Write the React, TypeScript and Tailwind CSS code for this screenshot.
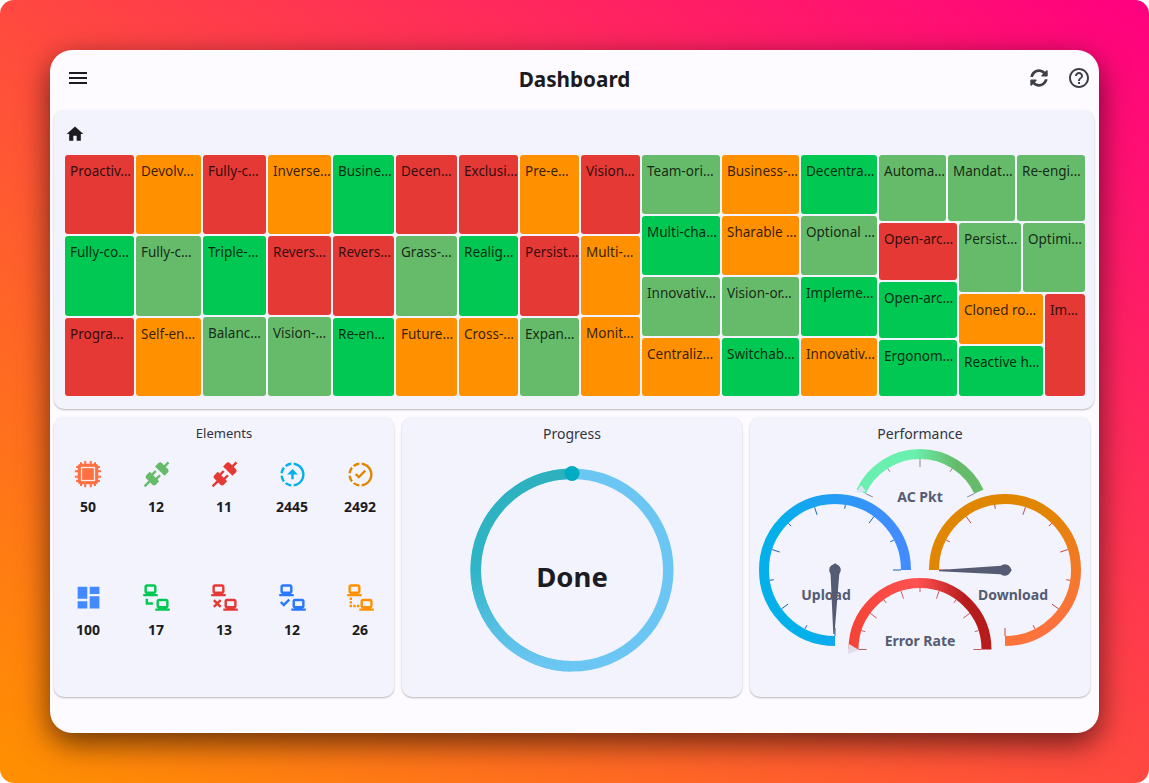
import React from "react";
import { MdMenu, MdHome, MdHelpOutline, MdDashboard } from "react-icons/md";
import { FaSyncAlt } from "react-icons/fa";

const tone: Record<string, string> = {
  r: "bg-[#e53935]",
  o: "bg-[#ff9100]",
  g: "bg-[#00c853]",
  s: "bg-[#66bb6a]",
};

function Cell({ t, c, size }: { t: string; c: string; size: string }) {
  return (
    <div className={`${size} ${tone[c]} shrink-0 rounded-[3px] pl-[5px] pt-[7px] text-[13.5px] leading-[18px] text-black/80 whitespace-nowrap overflow-hidden`}>
      {t}
    </div>
  );
}

const groupA: { w: string; cells: [string, string, string][] }[] = [
  { w: "w-[69px]", cells: [["Proactiv…", "r", "h-[79px]"], ["Fully-co…", "g", "h-[80px]"], ["Progra…", "r", "h-[78px]"]] },
  { w: "w-[65px]", cells: [["Devolv…", "o", "h-[79px]"], ["Fully-c…", "s", "h-[80px]"], ["Self-en…", "o", "h-[78px]"]] },
  { w: "w-[63px]", cells: [["Fully-c…", "r", "h-[79px]"], ["Triple-…", "g", "h-[79px]"], ["Balanc…", "s", "h-[79px]"]] },
  { w: "w-[63px]", cells: [["Inverse…", "o", "h-[79px]"], ["Revers…", "r", "h-[79px]"], ["Vision-…", "s", "h-[79px]"]] },
  { w: "w-[61px]", cells: [["Busine…", "g", "h-[79px]"], ["Revers…", "r", "h-[80px]"], ["Re-en…", "g", "h-[78px]"]] },
  { w: "w-[61px]", cells: [["Decen…", "r", "h-[79px]"], ["Grass-…", "s", "h-[80px]"], ["Future…", "o", "h-[78px]"]] },
  { w: "w-[59px]", cells: [["Exclusi…", "r", "h-[79px]"], ["Realig…", "g", "h-[80px]"], ["Cross-…", "o", "h-[78px]"]] },
  { w: "w-[59px]", cells: [["Pre-e…", "o", "h-[79px]"], ["Persist…", "r", "h-[80px]"], ["Expan…", "s", "h-[78px]"]] },
  { w: "w-[59px]", cells: [["Vision…", "r", "h-[79px]"], ["Multi-…", "o", "h-[79px]"], ["Monit…", "o", "h-[79px]"]] },
];

const groupB: { w: string; cells: [string, string][] }[] = [
  { w: "w-[78px]", cells: [["Team-ori…", "s"], ["Multi-cha…", "g"], ["Innovativ…", "s"], ["Centraliz…", "o"]] },
  { w: "w-[77px]", cells: [["Business-…", "o"], ["Sharable …", "o"], ["Vision-or…", "s"], ["Switchab…", "g"]] },
  { w: "w-[76px]", cells: [["Decentra…", "g"], ["Optional …", "s"], ["Impleme…", "g"], ["Innovativ…", "o"]] },
];
const bHeights = ["h-[59px]", "h-[59px]", "h-[59px]", "h-[58px]"];

function Treemap() {
  return (
    <div className="flex gap-[2px]">
      {groupA.map((col, i) => (
        <div key={i} className={`${col.w} flex flex-col gap-[2px]`}>
          {col.cells.map(([t, c, h]) => (
            <Cell key={t + c} t={t} c={c} size={h} />
          ))}
        </div>
      ))}
      {groupB.map((col, i) => (
        <div key={i} className={`${col.w} flex flex-col gap-[2px]`}>
          {col.cells.map(([t, c], j) => (
            <Cell key={t + c} t={t} c={c} size={bHeights[j]} />
          ))}
        </div>
      ))}
      <div className="w-[206px] flex flex-col gap-[2px]">
        <div className="flex gap-[2px]">
          <Cell t="Automa…" c="s" size="w-[67px] h-[66px]" />
          <Cell t="Mandat…" c="s" size="w-[67px] h-[66px]" />
          <Cell t="Re-engi…" c="s" size="w-[68px] h-[66px]" />
        </div>
        <div className="flex gap-[2px]">
          <div className="w-[78px] flex flex-col gap-[2px]">
            <Cell t="Open-arc…" c="r" size="h-[57px]" />
            <Cell t="Open-arc…" c="g" size="h-[56px]" />
            <Cell t="Ergonom…" c="g" size="h-[56px]" />
          </div>
          <div className="w-[126px] flex flex-col gap-[2px]">
            <div className="flex gap-[2px]">
              <Cell t="Persist…" c="s" size="w-[62px] h-[69px]" />
              <Cell t="Optimi…" c="s" size="w-[62px] h-[69px]" />
            </div>
            <div className="flex gap-[2px]">
              <div className="w-[84px] flex flex-col gap-[2px]">
                <Cell t="Cloned ro…" c="o" size="h-[50px]" />
                <Cell t="Reactive h…" c="g" size="h-[50px]" />
              </div>
              <Cell t="Im…" c="r" size="w-[40px] h-[102px]" />
            </div>
          </div>
        </div>
      </div>
    </div>
  );
}

const ring =
  "M13,2.03V2.05L13,4.05C17.39,4.59 20.5,8.58 19.96,12.97C19.5,16.61 16.64,19.5 13,19.93V21.93C18.5,21.38 22.5,16.5 21.95,11C21.5,6.25 17.73,2.5 13,2.03M11,2.06C9.05,2.25 7.19,3 5.67,4.26L7.1,5.74C8.22,4.84 9.57,4.26 11,4.06V2.06M4.26,5.67C3,7.19 2.25,9.04 2.05,11H4.05C4.24,9.58 4.8,8.23 5.69,7.1L4.26,5.67M2.06,13C2.26,14.96 3.03,16.81 4.27,18.33L5.69,16.9C4.81,15.77 4.24,14.42 4.06,13H2.06M7.1,18.37L5.67,19.74C7.18,21 9.04,21.79 11,22V20C9.58,19.82 8.23,19.25 7.1,18.37";
const laptops =
  "M4,1C2.89,1 2,1.89 2,3V7C2,8.11 2.89,9 4,9H1V11H13V9H10C11.11,9 12,8.11 12,7V3C12,1.89 11.11,1 10,1H4M4,3H10V7H4V3M14,13C12.89,13 12,13.89 12,15V19C12,20.11 12.89,21 14,21H11V23H23V21H20C21.11,21 22,20.11 22,19V15C22,13.89 21.11,13 20,13H14M14,15H20V19H14V15Z";
const plug =
  "M21.4 7.5C22.2 8.3 22.2 9.6 21.4 10.3L18.6 13.1L10.8 5.3L13.6 2.5C14.4 1.7 15.7 1.7 16.4 2.5L18.2 4.3L21.2 1.3L22.6 2.7L19.6 5.7L21.4 7.5M15.6 13.3L14.2 11.9L11.4 14.7L9.3 12.6L12.1 9.8L10.7 8.4L7.9 11.2L6.4 9.8L3.6 12.6C2.8 13.4 2.8 14.7 3.6 15.4L5.4 17.2L1.4 21.2L2.8 22.6L6.8 18.6L8.6 20.4C9.4 21.2 10.7 21.2 11.4 20.4L14.2 17.6L12.8 16.2L15.6 13.3Z";

function I({ d, c }: { d: string; c: string }) {
  return (
    <svg viewBox="0 0 24 24" className={`w-[29px] h-[29px] ${c}`} fill="currentColor">
      <path d={d} />
    </svg>
  );
}

function Chip() {
  return (
    <svg viewBox="0 0 24 24" className="w-[30px] h-[30px] text-[#ff7043]" fill="currentColor">
      <path d="M9 1.5h1.6V5H9zM13.4 1.5H15V5h-1.6zM9 19h1.6v3.5H9zM13.4 19H15v3.5h-1.6zM1.5 9H5v1.6H1.5zM1.5 13.4H5V15H1.5zM19 9h3.5v1.6H19zM19 13.4h3.5V15H19zM5.6 2.5h1.6V5H5.6zM16.8 2.5h1.6V5h-1.6zM5.6 19h1.6v2.5H5.6zM16.8 19h1.6v2.5h-1.6zM2.5 5.6H5v1.6H2.5zM2.5 16.8H5v1.6H2.5zM19 5.6h2.5v1.6H19zM19 16.8h2.5v1.6H19z" />
      <rect x="3.8" y="3.8" width="16.4" height="16.4" rx="2.6" />
      <rect x="6.8" y="6.8" width="10.4" height="10.4" fill="none" stroke="#fdeee8" strokeWidth="1" />
    </svg>
  );
}

const elements: { n: string; icon: React.ReactNode }[] = [
  { n: "50", icon: <Chip /> },
  { n: "12", icon: <I d={plug} c="text-[#66bb6a]" /> },
  { n: "11", icon: <I d={plug} c="text-[#e53935]" /> },
  { n: "2445", icon: <I d={ring + "M12,7.5L7.5,12H11V16H13V12H16.5L12,7.5Z"} c="text-[#03b0ea]" /> },
  { n: "2492", icon: <I d={ring + "M10.6,15.6L7.3,12.3L8.7,10.9L10.6,12.8L15.3,8.1L16.7,9.5Z"} c="text-[#e18600]" /> },
  { n: "100", icon: <MdDashboard size={29} color="#448aff" /> },
  { n: "17", icon: <I d={laptops + "M3,13V18H9V16H5V13H3Z"} c="text-[#00c853]" /> },
  { n: "13", icon: <I d={laptops + "M3.88,13.46L2.46,14.88L4.59,17L2.46,19.12L3.88,20.54L6,18.41L8.12,20.54L9.54,19.12L7.41,17L9.54,14.88L8.12,13.46L6,15.59L3.88,13.46Z"} c="text-[#e53935]" /> },
  { n: "12", icon: <I d={laptops + "M4.8,19.6L1.6,16.4L3,15L4.8,16.8L8.6,13L10,14.4Z"} c="text-[#2979ff]" /> },
  { n: "26", icon: <I d={laptops + "M3,12V14H5V12H3M3,15V17H5V15H3M3,18V20H5V18H3M6,18V20H8V18H6M9,18V20H11V18H9Z"} c="text-[#ff9100]" /> },
];

function Elements() {
  return (
    <div className="grid grid-cols-5 gap-y-[10px] pt-[10px]">
      {elements.map((e, i) => (
        <div key={i} className="flex flex-col items-center h-[113px]">
          <div className="h-[30px] flex items-center justify-center">{e.icon}</div>
          <div className="mt-[9px] text-[14px] leading-[18px] font-bold text-[#1c1b22]">{e.n}</div>
        </div>
      ))}
    </div>
  );
}

function pt(cx: number, cy: number, r: number, a: number) {
  const t = (a * Math.PI) / 180;
  return [cx + r * Math.sin(t), cy - r * Math.cos(t)];
}
function arc(cx: number, cy: number, r: number, a0: number, a1: number) {
  const [x0, y0] = pt(cx, cy, r, a0);
  const [x1, y1] = pt(cx, cy, r, a1);
  return `M${x0} ${y0}A${r} ${r} 0 ${a1 - a0 > 180 ? 1 : 0} 1 ${x1} ${y1}`;
}

function Gauge({ cx, cy, R, a0, a1, n, grad, tick, op }: { cx: number; cy: number; R: number; a0: number; a1: number; n: number; grad: string; tick: string; op: number }) {
  const ticks = [];
  for (let i = 0; i <= n; i++) {
    const a = a0 + ((a1 - a0) * i) / n;
    const len = i % 2 === 0 ? 8 : 4;
    const [x0, y0] = pt(cx, cy, R - 10, a);
    const [x1, y1] = pt(cx, cy, R - 10 - len, a);
    ticks.push(<line key={i} x1={x0} y1={y0} x2={x1} y2={y1} stroke={tick} strokeOpacity={op} strokeWidth={1} />);
  }
  return (
    <g>
      <path d={arc(cx, cy, R - 5, a0, a1)} fill="none" stroke={`url(#${grad})`} strokeWidth={10} />
      {ticks}
    </g>
  );
}

function Needle({ x, y, rot, len }: { x: number; y: number; rot: number; len: number }) {
  return (
    <g transform={`translate(${x} ${y}) rotate(${rot})`} fill="#555b72">
      <polygon points={`-4.6,0 4.6,0 0.6,${-len} -0.6,${-len}`} />
      <circle r="5.8" />
      <polygon points="-2.4,5 2.4,5 0,6.8" />
    </g>
  );
}

function Performance() {
  const label = { fontFamily: "'Noto Sans', sans-serif", fontWeight: 700, fontSize: 14, fill: "#555b72", textAnchor: "middle" as const };
  return (
    <svg viewBox="750 449 340 248" className="w-[340px] h-[248px] overflow-visible">
      <defs>
        <linearGradient id="gu" gradientUnits="userSpaceOnUse" x1="790" y1="570" x2="905" y2="540">
          <stop offset="0" stopColor="#03b0ea" />
          <stop offset="1" stopColor="#448aff" />
        </linearGradient>
        <linearGradient id="gd" gradientUnits="userSpaceOnUse" x1="1000" y1="530" x2="1060" y2="635">
          <stop offset="0" stopColor="#e08600" />
          <stop offset="1" stopColor="#ff7043" />
        </linearGradient>
        <linearGradient id="ga" gradientUnits="userSpaceOnUse" x1="860" y1="470" x2="980" y2="470">
          <stop offset="0" stopColor="#69f0ae" />
          <stop offset="0.45" stopColor="#69f0ae" />
          <stop offset="0.8" stopColor="#66bb6a" />
          <stop offset="1" stopColor="#66bb6a" />
        </linearGradient>
        <linearGradient id="ge" gradientUnits="userSpaceOnUse" x1="850" y1="600" x2="985" y2="600">
          <stop offset="0" stopColor="#f44336" />
          <stop offset="0.5" stopColor="#ff5252" />
          <stop offset="0.85" stopColor="#b71c1c" />
          <stop offset="1" stopColor="#b71c1c" />
        </linearGradient>
      </defs>
      <Gauge cx={835} cy={570} R={76} a0={180} a1={450} n={10} grad="gu" tick="#1565c0" op={1} />
      <Gauge cx={1005} cy={570} R={76} a0={270} a1={540} n={10} grad="gd" tick="#b71c1c" op={0.8} />
      <Gauge cx={920} cy={519} R={70} a0={-65} a1={65} n={4} grad="ga" tick="#555b72" op={0.7} />
      <polygon points="861,485 856,493 866,491" fill="#dbe3f4" />
      <Gauge cx={920} cy={649.5} R={71.5} a0={270} a1={450} n={10} grad="ge" tick="#b71c1c" op={0.7} />
      <polygon points="849,644 848,654 859,650" fill="#e0dcec" />
      <text x={920} y={502} {...label}>AC Pkt</text>
      <text x={826} y={600} {...label}>Upload</text>
      <text x={1013} y={600} {...label}>Download</text>
      <text x={920} y={646} {...label}>Error Rate</text>
      <Needle x={835} y={570} rot={181} len={64} />
      <Needle x={1005} y={570} rot={-90.5} len={66} />
    </svg>
  );
}

function Progress() {
  return (
    <div className="relative w-[340px] h-[248px]">
      <svg viewBox="402 449 340 248" className="w-[340px] h-[248px] overflow-visible">
        <defs>
          <linearGradient id="gp" gradientUnits="userSpaceOnUse" x1="0" y1="474" x2="0" y2="666">
            <stop offset="0" stopColor="#2db1be" />
            <stop offset="0.5" stopColor="#2fb5c6" />
            <stop offset="1" stopColor="#6cc6f3" />
          </linearGradient>
        </defs>
        <circle cx={572} cy={570} r={96.3} fill="none" stroke="#6cc6f3" strokeWidth={10.5} />
        <path d={arc(572, 570, 96.3, 180, 360)} fill="none" stroke="url(#gp)" strokeWidth={10.5} />
        <circle cx={572} cy={473.5} r={7.5} fill="#00acc1" />
      </svg>
      <div className="absolute left-0 right-0 top-[106px] text-center text-[27.5px] leading-[44px] font-bold text-[#1c1b22]">Done</div>
    </div>
  );
}

function Panel({ title, small, children }: { title: string; small?: boolean; children: React.ReactNode }) {
  return (
    <div className="w-[340px] h-[280px] rounded-[10px] bg-[#f2f3fc] shadow-[0_1px_2px_rgba(0,0,0,0.28)] flex flex-col">
      <div className={`h-[32px] shrink-0 flex items-center justify-center pt-[1px] text-[#33333d] ${small ? "text-[13px]" : "text-[14px]"}`}>{title}</div>
      {children}
    </div>
  );
}

export default function App() {
  return (
    <div className="w-screen h-screen p-[50px] rounded-[14px] bg-[linear-gradient(to_top_right,#ff9100,#ff0080)] font-['Noto_Sans',sans-serif]">
      <div className="h-full rounded-[22px] bg-[#fdfbff] shadow-[0_10px_30px_rgba(0,0,0,0.6)] flex flex-col">
        <header className="h-[60px] shrink-0 grid grid-cols-[1fr_auto_1fr] items-center text-[#1c1b22]">
          <div className="flex pl-[16px] mb-[4px]">
            <MdMenu size={24} />
          </div>
          <h1 className="text-[20.7px] font-bold">Dashboard</h1>
          <div className="flex justify-end items-center gap-[19px] pr-[8px] mb-[4px] text-[#3f3f48]">
            <FaSyncAlt size={18} />
            <MdHelpOutline size={24} />
          </div>
        </header>
        <section className="ml-[4px] mr-[5px] h-[299px] rounded-[10px] bg-[#f2f3fc] shadow-[0_1px_2px_rgba(0,0,0,0.28)] pl-[11px] pt-[14px]">
          <MdHome size={20} className="text-[#1c1b22] mb-[11px]" />
          <Treemap />
        </section>
        <div className="mx-[4px] mt-[8px] flex gap-[8px]">
          <Panel title="Elements" small>
            <Elements />
          </Panel>
          <Panel title="Progress">
            <Progress />
          </Panel>
          <Panel title="Performance">
            <Performance />
          </Panel>
        </div>
      </div>
    </div>
  );
}
